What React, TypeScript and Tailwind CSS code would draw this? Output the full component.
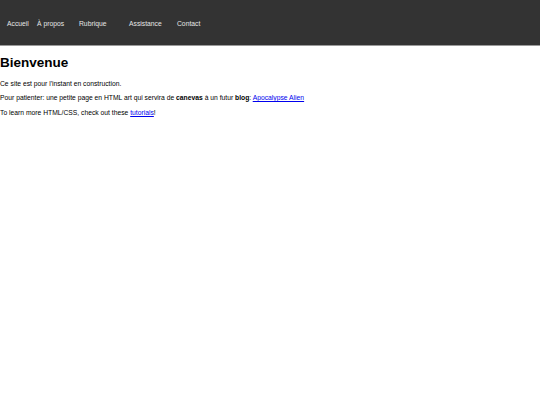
const navItems = [
  { label: "Accueil", w: "w-[30px]" },
  { label: "À propos", w: "w-[42px]" },
  { label: "Rubrique", w: "w-[50px]" },
  { label: "Assistance", w: "w-[48px]" },
  { label: "Contact", w: "w-[40px]" },
];

export default function App() {
  return (
    <div className="min-h-[405px] bg-white text-black" style={{ fontFamily: '"Liberation Sans", Arial, sans-serif' }}>
      <header className="h-[46px] bg-[#333333] border-b border-[#9a9a9a] flex items-center pl-[7px] pt-[2px]">
        <nav className="flex">
          {navItems.map((item) => (
            <a key={item.label} className={`${item.w} text-[6.75px] leading-[8px] text-[#e6e6e6] whitespace-nowrap`}>
              {item.label}
            </a>
          ))}
        </nav>
      </header>

      <main>
        <h1 className="text-[13.5px] leading-[16px] font-bold mt-[9px] mb-[9px]">Bienvenue</h1>
        <p className="text-[6.75px] leading-[7.7px] mb-[6.6px]">Ce site est pour l'instant en construction.</p>
        <p className="text-[6.75px] leading-[7.7px] mb-[6.6px]">
          Pour patienter: une petite page en HTML art qui servira de <b>canevas</b> à un futur <b>blog</b>:{" "}
          <a href="#" className="text-[#0000ee] underline">Apocalypse Alien</a>
        </p>
        <p className="text-[6.75px] leading-[7.7px]">
          To learn more HTML/CSS, check out these{" "}
          <a href="#" className="text-[#0000ee] underline">tutorials</a>!
        </p>
      </main>
    </div>
  );
}
